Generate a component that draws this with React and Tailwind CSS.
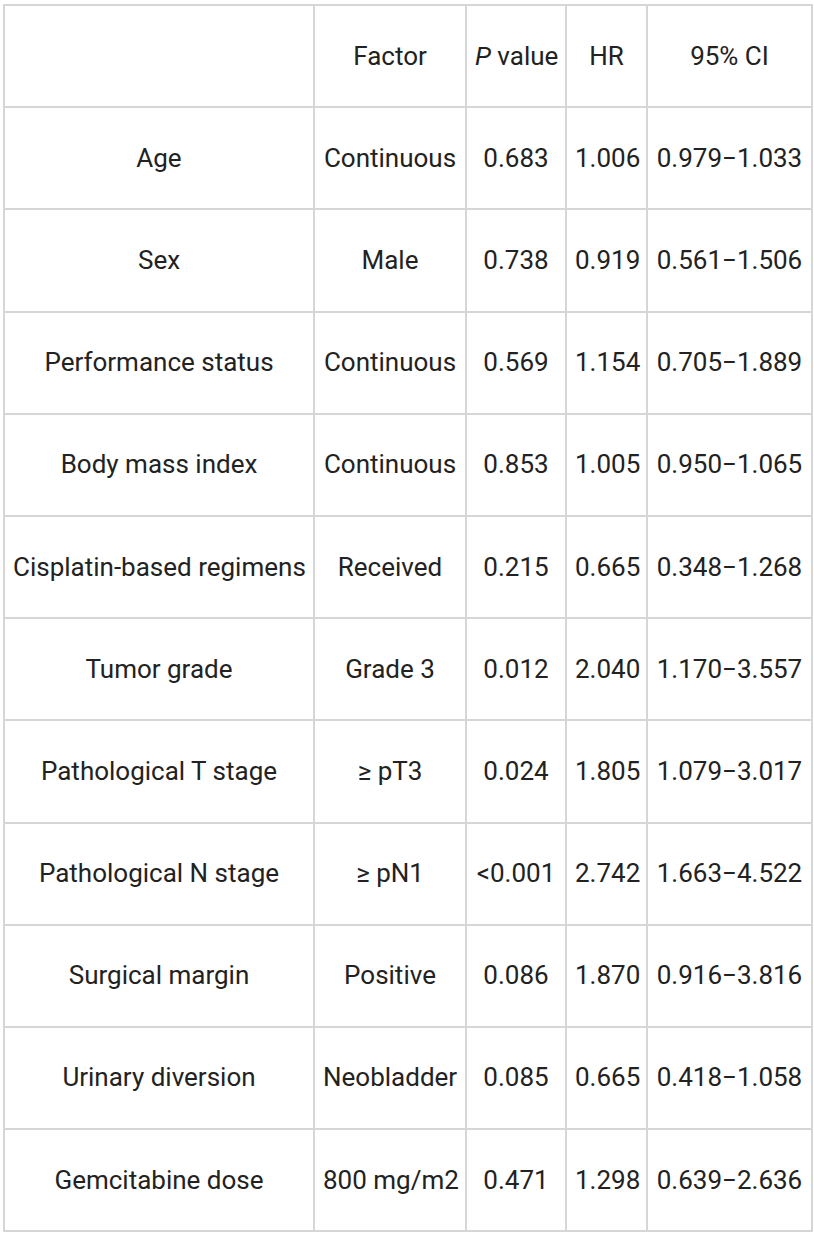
const rows = [
  ['Age', 'Continuous', '0.683', '1.006', '0.979−1.033'],
  ['Sex', 'Male', '0.738', '0.919', '0.561−1.506'],
  ['Performance status', 'Continuous', '0.569', '1.154', '0.705−1.889'],
  ['Body mass index', 'Continuous', '0.853', '1.005', '0.950−1.065'],
  ['Cisplatin-based regimens', 'Received', '0.215', '0.665', '0.348−1.268'],
  ['Tumor grade', 'Grade 3', '0.012', '2.040', '1.170−3.557'],
  ['Pathological T stage', '≥ pT3', '0.024', '1.805', '1.079−3.017'],
  ['Pathological N stage', '≥ pN1', '<0.001', '2.742', '1.663−4.522'],
  ['Surgical margin', 'Positive', '0.086', '1.870', '0.916−3.816'],
  ['Urinary diversion', 'Neobladder', '0.085', '0.665', '0.418−1.058'],
  ['Gemcitabine dose', '800 mg/m2', '0.471', '1.298', '0.639−2.636'],
]

const cell = 'border-2 border-[#d6d6d6] px-[8px] text-center align-middle whitespace-nowrap font-normal'

export default function App() {
  return (
    <div className="bg-white px-[3px] pt-[4px] pb-[6px] font-['Roboto',sans-serif] text-[26px] text-[#222]">
      <table className="w-[808px] table-fixed border-collapse border-2 border-[#d6d6d6]">
        <colgroup>
          <col className="w-[310px]" />
          <col className="w-[152px]" />
          <col className="w-[100px]" />
          <col className="w-[81px]" />
          <col className="w-[165px]" />
        </colgroup>
        <thead>
          <tr className="h-[102.2px]">
            <th className={cell}></th>
            <th className={cell}>Factor</th>
            <th className={cell}>
              <i>P</i> value
            </th>
            <th className={cell}>HR</th>
            <th className={cell}>95% CI</th>
          </tr>
        </thead>
        <tbody>
          {rows.map((r) => (
            <tr key={r[0]} className="h-[102.2px]">
              {r.map((v, i) => (
                <td key={i} className={cell}>
                  {v}
                </td>
              ))}
            </tr>
          ))}
        </tbody>
      </table>
    </div>
  )
}
